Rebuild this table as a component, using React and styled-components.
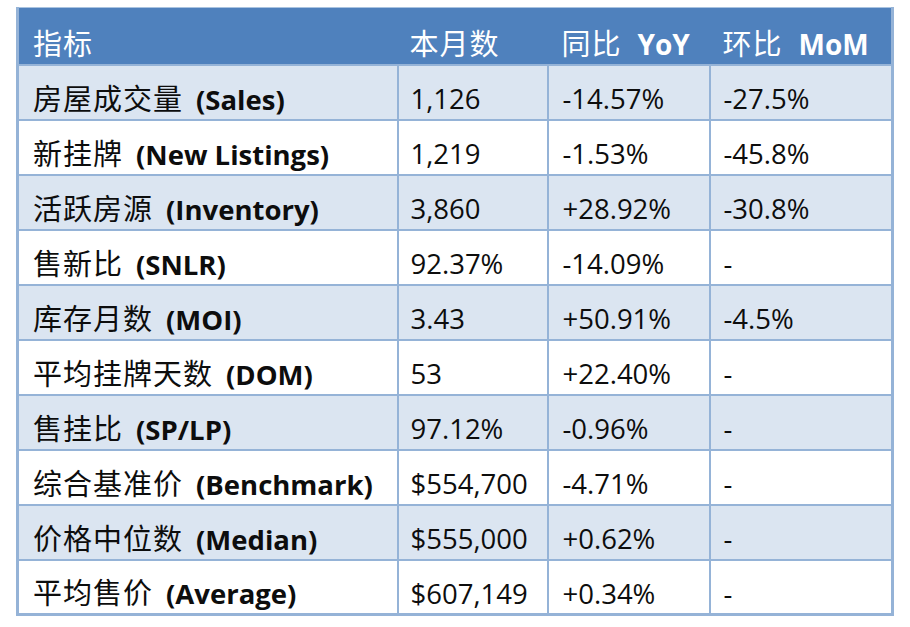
import React from "react";
import styled, { createGlobalStyle } from "styled-components";

const rows = [
  { zh: "房屋成交量", en: "(Sales)", value: "1,126", yoy: "-14.57%", mom: "-27.5%" },
  { zh: "新挂牌", en: "(New Listings)", value: "1,219", yoy: "-1.53%", mom: "-45.8%" },
  { zh: "活跃房源", en: "(Inventory)", value: "3,860", yoy: "+28.92%", mom: "-30.8%" },
  { zh: "售新比", en: "(SNLR)", value: "92.37%", yoy: "-14.09%", mom: "-" },
  { zh: "库存月数", en: "(MOI)", value: "3.43", yoy: "+50.91%", mom: "-4.5%" },
  { zh: "平均挂牌天数", en: "(DOM)", value: "53", yoy: "+22.40%", mom: "-" },
  { zh: "售挂比", en: "(SP/LP)", value: "97.12%", yoy: "-0.96%", mom: "-" },
  { zh: "综合基准价", en: "(Benchmark)", value: "$554,700", yoy: "-4.71%", mom: "-" },
  { zh: "价格中位数", en: "(Median)", value: "$555,000", yoy: "+0.62%", mom: "-" },
  { zh: "平均售价", en: "(Average)", value: "$607,149", yoy: "+0.34%", mom: "-" },
];

const GlobalStyle = createGlobalStyle`
  body {
    margin: 0;
    background: #ffffff;
    font-family: "Open Sans", "Noto Sans CJK SC", sans-serif;
  }
`;

const Page = styled.div`
  padding: 7px 0 0 16px;
`;

const Table = styled.table`
  border-collapse: collapse;
  table-layout: fixed;
  width: 875px;
  border: 3px solid #95b3d7;
  border-top: 1px solid #a9c3e0;
`;

const HeadCell = styled.th`
  box-sizing: border-box;
  height: 57px;
  padding: 16px 0 0 ${(p) => p.$pad || 12}px;
  background: #4f81bd;
  color: #ffffff;
  font-size: 28px;
  line-height: 36px;
  font-weight: 400;
  text-align: left;
  vertical-align: middle;
  white-space: nowrap;
`;

const Row = styled.tr`
  background: ${(p) => (p.$shaded ? "#dbe5f1" : "#ffffff")};
`;

const Cell = styled.td`
  box-sizing: border-box;
  height: 55px;
  padding: 14px 0 0 ${(p) => p.$pad || 12}px;
  border: 2px solid #95b3d7;
  color: #0d0d0d;
  font-size: 27.5px;
  line-height: 34px;
  vertical-align: middle;
  white-space: nowrap;
`;

const Zh = styled.span`
  font-size: 29px;
  letter-spacing: 1px;
  margin-right: ${(p) => (p.$head ? 16 : 13)}px;
`;

const En = styled.span`
  font-size: ${(p) => (p.$head ? 28 : 27.5)}px;
  font-weight: 700;
`;

export default function App() {
  return (
    <>
      <GlobalStyle />
      <Page>
        <Table>
          <colgroup>
            <col style={{ width: 380 }} />
            <col style={{ width: 150 }} />
            <col style={{ width: 162 }} />
            <col style={{ width: 183 }} />
          </colgroup>
          <thead>
            <tr>
              <HeadCell $pad={14}>
                <Zh $head>指标</Zh>
              </HeadCell>
              <HeadCell>
                <Zh $head>本月数</Zh>
              </HeadCell>
              <HeadCell $pad={14}>
                <Zh $head>同比</Zh>
                <En $head>YoY</En>
              </HeadCell>
              <HeadCell $pad={13}>
                <Zh $head>环比</Zh>
                <En $head>MoM</En>
              </HeadCell>
            </tr>
          </thead>
          <tbody>
            {rows.map((r, i) => (
              <Row key={r.zh} $shaded={i % 2 === 0}>
                <Cell $pad={14}>
                  <Zh>{r.zh}</Zh>
                  <En>{r.en}</En>
                </Cell>
                <Cell>{r.value}</Cell>
                <Cell $pad={14}>{r.yoy}</Cell>
                <Cell $pad={13}>{r.mom}</Cell>
              </Row>
            ))}
          </tbody>
        </Table>
      </Page>
    </>
  );
}
